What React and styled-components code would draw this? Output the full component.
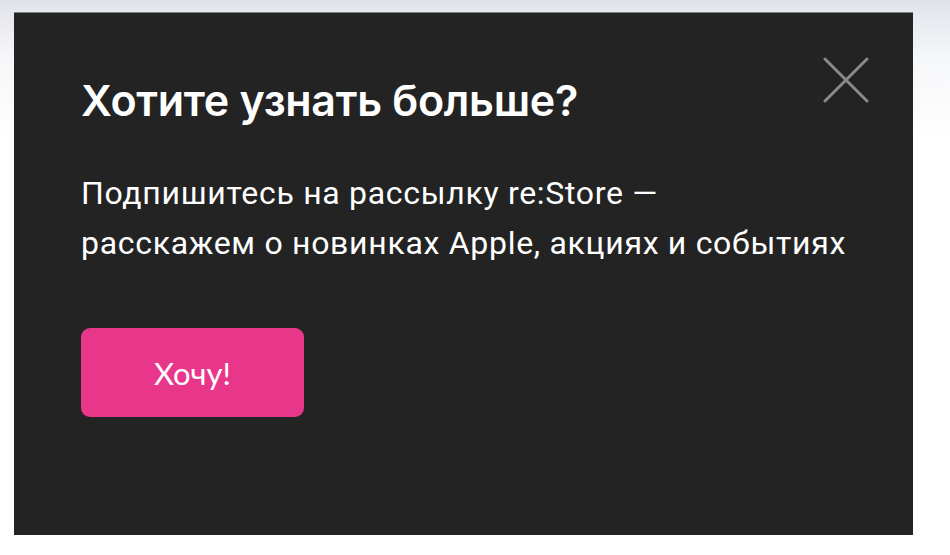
import styled, { createGlobalStyle } from "styled-components";

const GlobalStyle = createGlobalStyle`
  html, body {
    margin: 0;
    padding: 0;
  }
  body {
    font-family: "Inter", "Roboto", sans-serif;
    background: #ffffff;
  }
`;

export default function App() {
  return (
    <Backdrop>
      <GlobalStyle />
      <Modal>
        <CloseButton aria-label="Закрыть">
          <svg width="46" height="46" viewBox="0 0 46 46">
            <path d="M2 2L44 44M44 2L2 44" stroke="#8a8a8a" strokeWidth="3" strokeLinecap="round" />
          </svg>
        </CloseButton>
        <Title>Хотите узнать больше?</Title>
        <Text>
          Подпишитесь на рассылку re:Store —<br />
          расскажем о новинках Apple, акциях и событиях
        </Text>
        <Button>Хочу!</Button>
      </Modal>
    </Backdrop>
  );
}

const Backdrop = styled.div`
  height: 555px;
  overflow: hidden;
  padding: 12px 0 0 14px;
  box-sizing: border-box;
  background: linear-gradient(180deg, #dfe2ea 0px, #e6e8ef 12px, #f6f7f9 60px, #ffffff 140px);
`;

const Modal = styled.div`
  position: relative;
  width: 899px;
  height: 523px;
  box-sizing: border-box;
  background: #232323;
  border-top: 1px solid #7d8086;
  padding: 63px 0 0 67px;
`;

const CloseButton = styled.button`
  position: absolute;
  top: 44px;
  right: 44px;
  padding: 0;
  border: 0;
  background: none;
  cursor: pointer;
  display: flex;
`;

const Title = styled.h2`
  margin: 0;
  font-family: "Inter", sans-serif;
  font-weight: 600;
  font-size: 43px;
  line-height: 48px;
  color: #ffffff;
  letter-spacing: -0.3px;
`;

const Text = styled.p`
  margin: 44px 0 0;
  font-family: "Roboto", sans-serif;
  font-size: 32px;
  line-height: 50px;
  letter-spacing: 0.7px;
  color: #ffffff;
`;

const Button = styled.button`
  margin-top: 60px;
  width: 223px;
  height: 89px;
  border: 0;
  border-radius: 9px;
  background: #e8378a;
  color: #ffffff;
  font-family: "Lato", sans-serif;
  font-size: 31px;
  cursor: pointer;
`;
